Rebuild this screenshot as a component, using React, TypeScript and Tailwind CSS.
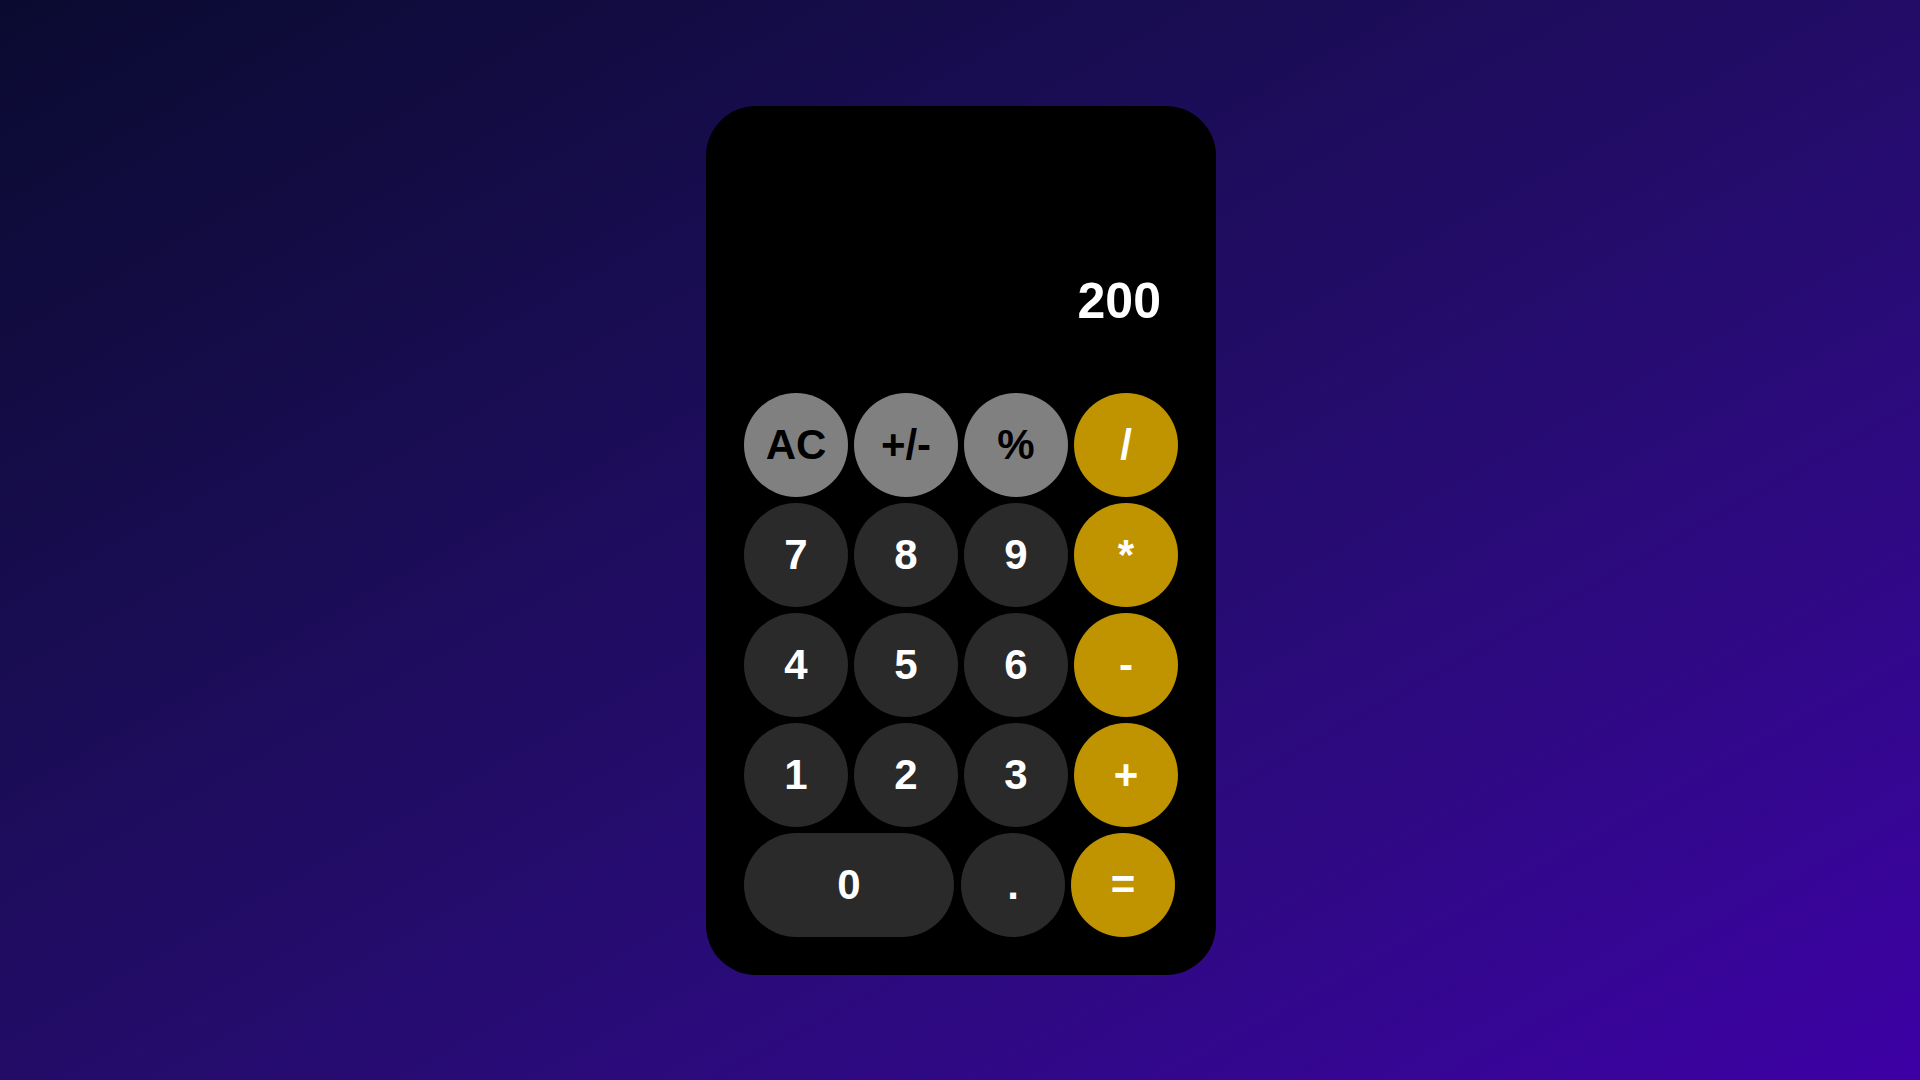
type Key = {
  label: string
  kind: 'fn' | 'num' | 'op'
  wide?: boolean
}

const rows: Key[][] = [
  [
    {label: 'AC', kind: 'fn'},
    {label: '+/-', kind: 'fn'},
    {label: '%', kind: 'fn'},
    {label: '/', kind: 'op'},
  ],
  [
    {label: '7', kind: 'num'},
    {label: '8', kind: 'num'},
    {label: '9', kind: 'num'},
    {label: '*', kind: 'op'},
  ],
  [
    {label: '4', kind: 'num'},
    {label: '5', kind: 'num'},
    {label: '6', kind: 'num'},
    {label: '-', kind: 'op'},
  ],
  [
    {label: '1', kind: 'num'},
    {label: '2', kind: 'num'},
    {label: '3', kind: 'num'},
    {label: '+', kind: 'op'},
  ],
]

const kindClass = {
  fn: 'bg-[#808080] text-black',
  num: 'bg-[#2a2a2a] text-white',
  op: 'bg-[#bf9400] text-white',
}

const CalcButton = ({label, kind, wide}: Key) => (
  <button
    className={`flex h-[104px] items-center justify-center rounded-full text-[42px] font-bold leading-none ${
      wide ? 'w-[210px]' : 'w-[104px]'
    } ${kindClass[kind]}`}
  >
    {label}
  </button>
)

const App = () => {
  return (
    <div className="flex min-h-screen items-center justify-center bg-linear-to-br from-[#0a0a30] to-[#3d00a5] font-['Liberation_Sans',Arial,sans-serif]">
      <div className="ml-[2px] flex h-[869px] w-[510px] flex-col justify-end rounded-[50px] bg-black p-[38px]">
        <div className="mb-[54px] pr-[17px] text-right text-[50px] font-bold text-white">200</div>
        <div className="flex flex-col gap-[6px]">
          {rows.map((row, idx) => (
            <div key={idx} className="flex gap-[6px]">
              {row.map((key) => (
                <CalcButton key={key.label} {...key} />
              ))}
            </div>
          ))}
          <div className="flex">
            <CalcButton label="0" kind="num" wide />
            <div className="ml-[7px] flex gap-[6px]">
              <CalcButton label="." kind="num" />
              <CalcButton label="=" kind="op" />
            </div>
          </div>
        </div>
      </div>
    </div>
  )
}

export default App
